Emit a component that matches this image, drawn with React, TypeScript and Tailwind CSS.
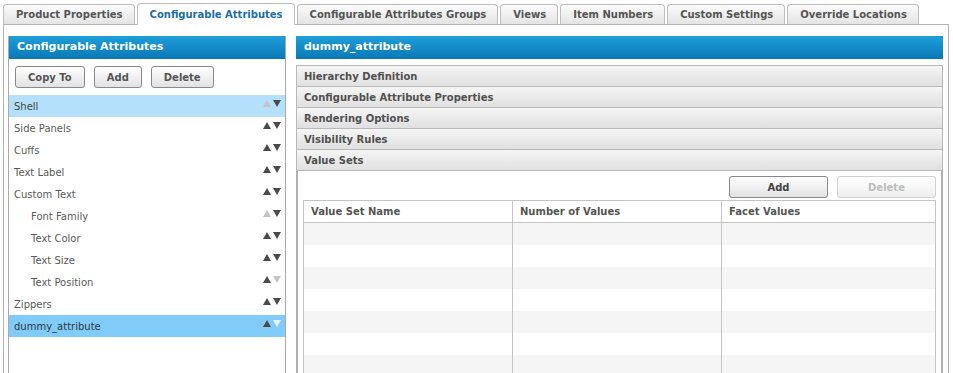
import React from "react";

const tabs = [
  "Product Properties",
  "Configurable Attributes",
  "Configurable Attributes Groups",
  "Views",
  "Item Numbers",
  "Custom Settings",
  "Override Locations",
];

type Item = { label: string; indent?: boolean; upOff?: boolean; downOff?: boolean; sel?: "light" | "strong" };

const items: Item[] = [
  { label: "Shell", upOff: true, sel: "light" },
  { label: "Side Panels" },
  { label: "Cuffs" },
  { label: "Text Label" },
  { label: "Custom Text" },
  { label: "Font Family", indent: true, upOff: true },
  { label: "Text Color", indent: true },
  { label: "Text Size", indent: true },
  { label: "Text Position", indent: true, downOff: true },
  { label: "Zippers" },
  { label: "dummy_attribute", downOff: true, sel: "strong" },
];

function Up({ off, light }: { off?: boolean; light?: boolean }) {
  return (
    <svg width="8" height="7" viewBox="0 0 8 7">
      <polygon points="4,0 8,7 0,7" fill={off ? (light ? "#e6f2fb" : "#c4c4c4") : "#4a4a4a"} />
    </svg>
  );
}
function Down({ off, light }: { off?: boolean; light?: boolean }) {
  return (
    <svg width="8" height="7" viewBox="0 0 8 7">
      <polygon points="0,0 8,0 4,7" fill={off ? (light ? "#e6f2fb" : "#c4c4c4") : "#4a4a4a"} />
    </svg>
  );
}

const accordion = [
  "Hierarchy Definition",
  "Configurable Attribute Properties",
  "Rendering Options",
  "Visibility Rules",
  "Value Sets",
];

export default function App() {
  return (
    <div className="w-[953px] h-[373px] overflow-hidden bg-white font-['DejaVu_Sans',Verdana,sans-serif]">
      {/* Tabs */}
      <div className="flex items-end h-[24px] pl-[3px] gap-[2px]">
        {tabs.map((t, i) =>
          i === 1 ? (
            <div
              key={t}
              className="relative z-10 mb-[-1px] h-[22px] pl-[12px] pr-[11px] flex items-center bg-white border border-b-0 border-[#bdbdbd] rounded-t-[4px] text-[10px] font-bold text-[#1d6ea3]"
            >
              {t}
            </div>
          ) : (
            <div
              key={t}
              className="h-[20px] pl-[12px] pr-[11px] flex items-center bg-linear-to-b from-[#fbfbfb] to-[#e4e4e4] border border-b-0 border-[#bdbdbd] rounded-t-[4px] text-[10px] font-bold text-[#555]"
            >
              {t}
            </div>
          )
        )}
      </div>

      {/* Content box */}
      <div className="ml-[3px] w-[946px] h-[360px] border border-[#b5b5b5] flex pt-[11px] pl-[4px] pr-[5px]">
        {/* Left panel */}
        <div className="w-[278px] shrink-0 border border-t-0 border-[#aaa] flex flex-col">
          <div className="h-[23px] shrink-0 bg-linear-to-b from-[#1e9fdb] to-[#0a78b6] flex items-center pl-[8px] text-[11px] font-bold text-white">
            Configurable Attributes
          </div>
          <div className="flex gap-[9px] pt-[7px] pl-[6px] shrink-0">
            {["Copy To", "Add", "Delete"].map((b) => (
              <div
                key={b}
                className="h-[22px] px-[12px] flex items-center border border-[#8a8a8a] rounded-[3px] bg-linear-to-b from-[#ffffff] to-[#e2e2e2] text-[10px] font-bold text-[#555]"
              >
                {b}
              </div>
            ))}
          </div>
          <div className="mt-[7px] flex flex-col shrink-0">
            {items.map((it) => (
              <div
                key={it.label}
                className={
                  "h-[22px] shrink-0 flex items-center justify-between pr-[4px] text-[10px] " +
                  (it.indent ? "pl-[22px] " : "pl-[5px] ") +
                  (it.sel === "light"
                    ? "bg-[#b4e0fb] text-[#444]"
                    : it.sel === "strong"
                    ? "bg-[#80cbf8] text-[#2d3a44]"
                    : "text-[#5a5a5a]")
                }
              >
                <span>{it.label}</span>
                <span className="flex gap-[2px] self-start mt-[5px]">
                  <Up off={it.upOff} light={it.sel === "strong"} />
                  <Down off={it.downOff} light={it.sel === "strong"} />
                </span>
              </div>
            ))}
          </div>
        </div>

        {/* Right panel */}
        <div className="ml-[10px] w-[647px] shrink-0 flex flex-col overflow-hidden">
          <div className="h-[23px] shrink-0 bg-linear-to-b from-[#1e9fdb] to-[#0a78b6] flex items-center pl-[8px] text-[11px] font-bold text-white">
            dummy_attribute
          </div>
          <div className="mt-[6px] flex flex-col shrink-0">
            {accordion.map((a, i) => (
              <div
                key={a}
                className={
                  "shrink-0 flex items-center pl-[7px] border-x border-t border-[#b8b8b8] bg-linear-to-b from-[#f5f5f5] to-[#e0e0e0] text-[10px] font-bold text-[#505050] " +
                  (i === accordion.length - 1 ? "h-[22px] border-b" : "h-[21px]")
                }
              >
                {a}
              </div>
            ))}
          </div>
          <div className="flex-1 min-h-0 border-x-2 border-[#b0b0b0] flex flex-col px-[5px] pt-[5px] overflow-hidden">
            <div className="flex justify-end gap-[9px] shrink-0">
              <div className="w-[99px] h-[22px] flex items-center justify-center border border-[#888] rounded-[3px] bg-linear-to-b from-[#ffffff] to-[#e2e2e2] text-[10px] font-bold text-[#444]">
                Add
              </div>
              <div className="w-[99px] h-[22px] flex items-center justify-center border border-[#d0d0d0] rounded-[3px] bg-linear-to-b from-[#ffffff] to-[#eeeeee] text-[10px] font-bold text-[#bdbdbd]">
                Delete
              </div>
            </div>
            <div className="mt-[2px] border border-b-0 border-[#c4c4c4] flex flex-col shrink-0">
              <div className="grid grid-cols-[208px_209px_1fr] h-[22px] shrink-0 border-b border-[#c4c4c4] text-[10px] font-bold text-[#555]">
                <div className="flex items-center pl-[7px]">Value Set Name</div>
                <div className="flex items-center pl-[7px] border-l border-[#c4c4c4]">Number of Values</div>
                <div className="flex items-center pl-[7px] border-l border-[#c4c4c4]">Facet Values</div>
              </div>
              {[0, 1, 2, 3, 4, 5, 6, 7].map((r) => (
                <div
                  key={r}
                  className={"grid grid-cols-[208px_209px_1fr] h-[22px] shrink-0 " + (r % 2 === 0 ? "bg-[#f5f5f5]" : "bg-white")}
                >
                  <div />
                  <div className="border-l border-[#c4c4c4]" />
                  <div className="border-l border-[#c4c4c4]" />
                </div>
              ))}
            </div>
          </div>
        </div>
      </div>
    </div>
  );
}
